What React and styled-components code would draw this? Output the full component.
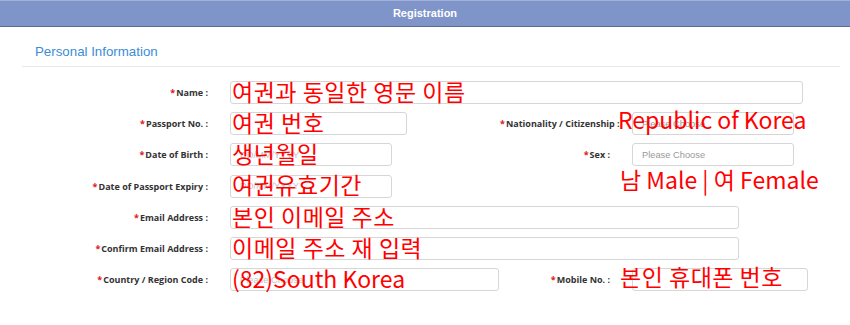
import React from "react";
import styled, { createGlobalStyle } from "styled-components";

const GlobalStyle = createGlobalStyle`
  body {
    margin: 0;
    background: #fff;
    font-family: "Liberation Sans", Arial, sans-serif;
  }
`;

// form data: each row has a left field and maybe a right one
const rows = [
  { left: { label: "Name", width: 573, note: "여권과 동일한 영문 이름", dy: -1 } },
  {
    left: { label: "Passport No.", width: 177, note: "여권 번호", dy: -1 },
    right: {
      label: "Nationality / Citizenship",
      width: 162,
      placeholder: "Please Choose",
      note: "Republic of Korea",
      latin: true,
      dx: -14,
      dy: -4,
    },
  },
  {
    left: { label: "Date of Birth", width: 162, placeholder: "DD/MM/YYYY", faint: true, note: "생년월일", dy: -1 },
    right: {
      label: "Sex",
      width: 162,
      placeholder: "Please Choose",
      note: "남 Male | 여 Female",
      latin: true,
      dx: -12,
      dy: 25,
    },
  },
  { left: { label: "Date of Passport Expiry", width: 162, placeholder: "DD/MM/YYYY", faint: true, note: "여권유효기간", dy: -1 } },
  { left: { label: "Email Address", width: 509, note: "본인 이메일 주소", dy: 0 } },
  { left: { label: "Confirm Email Address", width: 509, note: "이메일 주소 재 입력", dy: 0 } },
  {
    left: {
      label: "Country / Region Code",
      width: 269,
      placeholder: "Please Choose",
      faint: true,
      note: "(82)South Korea",
      latin: true,
      dy: -1,
    },
    right: { label: "Mobile No.", width: 176, note: "본인 휴대폰 번호", dx: -12, dy: -3 },
  },
];

const Field = ({ field, labelWidth }) => (
  <FieldGroup>
    <Label $width={labelWidth}>
      <Star>*</Star>
      {field.label} :
    </Label>
    <InputBox $width={field.width}>
      <Input readOnly placeholder={field.placeholder || ""} $faint={field.faint} />
      {field.note && (
        <Note $dx={field.dx ?? 2} $dy={field.dy ?? 0} $latin={field.latin}>
          {field.note}
        </Note>
      )}
    </InputBox>
  </FieldGroup>
);

const App = () => {
  return (
    <Page>
      <GlobalStyle />
      <Header>Registration</Header>
      <Section>
        <SectionTitle>Personal Information</SectionTitle>
        <Form>
          {rows.map((row, i) => (
            <Row key={i}>
              <Field field={row.left} labelWidth={230} />
              {row.right && (
                <RightCell>
                  <Field field={row.right} labelWidth={132} />
                </RightCell>
              )}
            </Row>
          ))}
        </Form>
      </Section>
    </Page>
  );
};

export default App;

const Page = styled.div`
  width: 850px;
  height: 325px;
  overflow: hidden;
  background: #fff;
`;

const Header = styled.div`
  height: 25px;
  line-height: 25px;
  border-top: 1px solid #a3b1da;
  border-bottom: 1px solid #5d6a94;
  background: #7f94c9;
  color: #fff;
  text-align: center;
  font-size: 11px;
  font-weight: bold;
`;

const Section = styled.div`
  margin: 0 10px 0 22px;
`;

const SectionTitle = styled.div`
  padding: 16px 0 0 13px;
  height: 23px;
  border-bottom: 1px solid #e8e8e8;
  color: #3a8dd5;
  font-size: 13.3px;
  line-height: 17px;
`;

const Form = styled.div`
  display: flex;
  flex-direction: column;
  gap: 8.2px;
  margin: 14px 0 0 -22px;
`;

const Row = styled.div`
  display: grid;
  grid-template-columns: 500px 1fr;
  height: 23px;
  align-items: center;
`;

const RightCell = styled.div`
  display: flex;
`;

const FieldGroup = styled.div`
  display: flex;
  align-items: center;
`;

const Label = styled.div`
  width: ${(p) => p.$width}px;
  flex: none;
  box-sizing: border-box;
  padding-right: 22px;
  text-align: right;
  white-space: nowrap;
  color: #333;
  font-family: "Open Sans", "Noto Sans", sans-serif;
  font-size: 9px;
  font-weight: bold;
`;

const Star = styled.span`
  color: #e0141e;
  margin-right: 1px;
`;

const InputBox = styled.div`
  position: relative;
  width: ${(p) => p.$width}px;
  height: 23px;
  flex: none;
`;

const Input = styled.input`
  display: block;
  width: 100%;
  height: 23px;
  box-sizing: border-box;
  border: 1px solid #d6d6d6;
  border-radius: 3px;
  padding: 0 0 0 9px;
  font-family: "Liberation Sans", Arial, sans-serif;
  font-size: 9.3px;
  outline: none;
  &::placeholder {
    color: ${(p) => (p.$faint ? "#c4c4c4" : "#999")};
  }
`;

const Note = styled.div`
  position: absolute;
  left: ${(p) => p.$dx}px;
  top: ${(p) => p.$dy - 0.5}px;
  white-space: nowrap;
  color: #ff0000;
  font-family: "Noto Sans CJK KR", "Noto Sans", sans-serif;
  font-size: 23px;
  line-height: 23px;
  letter-spacing: ${(p) => (p.$latin ? 0 : 0.5)}px;
  pointer-events: none;
`;
